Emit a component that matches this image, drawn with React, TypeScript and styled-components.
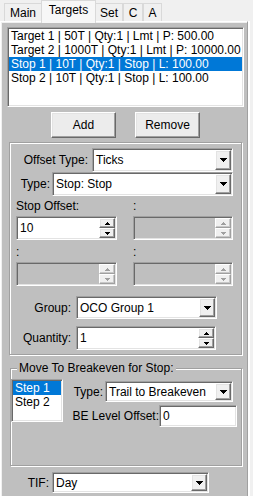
import React from 'react';
import styled, { createGlobalStyle, css } from 'styled-components';

const GlobalStyle = createGlobalStyle`
  html, body {
    margin: 0;
    padding: 0;
  }
  body {
    background: #f0f0f0;
    font-family: 'Liberation Sans', Arial, sans-serif;
    font-size: 12px;
    color: #000;
  }
`;

// 3d borders
const sunken = css`
  border: 1px solid;
  border-color: #a0a0a0 #fff #fff #a0a0a0;
  box-shadow: inset 1px 1px 0 #696969, inset -1px -1px 0 #e3e3e3;
`;
const raised = css`
  border: 1px solid;
  border-color: #fff #696969 #696969 #fff;
  box-shadow: inset -1px -1px 0 #a0a0a0, inset 1px 1px 0 #e3e3e3;
`;
const etched = css`
  border: 1px solid #a0a0a0;
  box-shadow: inset 1px 1px 0 #fff, 1px 1px 0 #fff;
`;

const targets = [
  'Target 1 | 50T | Qty:1 | Lmt | P: 500.00',
  'Target 2 | 1000T | Qty:1 | Lmt | P: 10000.00',
  'Stop 1 | 10T | Qty:1 | Stop | L: 100.00',
  'Stop 2 | 10T | Qty:1 | Stop | L: 100.00',
];

const tabs = [
  { name: 'Main', w: 38 },
  { name: 'Targets', w: 55 },
  { name: 'Set', w: 28 },
  { name: 'C', w: 20 },
  { name: 'A', w: 19 },
];

const DownArrow = ({ color = '#000' }: { color?: string }) => (
  <svg width='7' height='4' viewBox='0 0 7 4' shapeRendering='crispEdges'>
    <path d='M0 0h7v1h-1v1h-1v1h-1v1h-1v-1h-1v-1h-1v-1h-1z' fill={color} />
  </svg>
);

const SmallArrow = ({ up, color }: { up?: boolean; color: string }) => (
  <svg width='5' height='3' viewBox='0 0 5 3' shapeRendering='crispEdges'>
    {up ? (
      <path d='M2 0h1v1h1v1h1v1h-5v-1h1v-1h1z' fill={color} />
    ) : (
      <path d='M0 0h5v1h-1v1h-1v1h-1v-1h-1v-1h-1z' fill={color} />
    )}
  </svg>
);

const Combo = ({ w, h, value }: { w: number; h: number; value: string }) => (
  <ComboBox $w={w} $h={h}>
    <FieldText>{value}</FieldText>
    <DropButton>
      <DownArrow />
    </DropButton>
  </ComboBox>
);

const Spin = ({
  w,
  h,
  value,
  disabled,
}: {
  w: number;
  h: number;
  value?: string;
  disabled?: boolean;
}) => (
  <SpinBox $w={w} $h={h} $disabled={disabled}>
    <FieldText>{value}</FieldText>
    <SpinButtons>
      <SpinButton $disabled={disabled}>
        <SmallArrow up color={disabled ? '#a0a0a0' : '#000'} />
      </SpinButton>
      <SpinButton $disabled={disabled}>
        <SmallArrow color={disabled ? '#a0a0a0' : '#000'} />
      </SpinButton>
    </SpinButtons>
  </SpinBox>
);

const App = () => {
  return (
    <Window>
      <GlobalStyle />
      <TabStrip>
        {tabs.map((t) => (
          <Tab key={t.name} $w={t.w} $active={t.name === 'Targets'}>
            {t.name}
          </Tab>
        ))}
      </TabStrip>
      <TabFrame>
        <TabPage>
          <ListBox>
            {targets.map((t, i) => (
              <ListItem key={t} $selected={i === 2}>
                {t}
              </ListItem>
            ))}
          </ListBox>

          <ButtonRow>
            <Button>Add</Button>
            <Button>Remove</Button>
          </ButtonRow>

          <Panel>
            <FieldRow $mt={4}>
              <FieldLabel $w={81} $pr={4}>
                Offset Type:
              </FieldLabel>
              <Combo w={141} h={24} value='Ticks' />
            </FieldRow>
            <FieldRow $mt={0}>
              <FieldLabel $w={41} $pr={2}>
                Type:
              </FieldLabel>
              <Combo w={181} h={24} value='Stop: Stop' />
            </FieldRow>

            <OffsetGrid>
              <GridLabel>Stop Offset:</GridLabel>
              <GridLabel>:</GridLabel>
              <Spin w={101} h={24} value='10' />
              <Spin w={100} h={24} disabled />
              <GridLabel $mt={5}>:</GridLabel>
              <GridLabel $mt={5}>:</GridLabel>
              <Spin w={101} h={24} disabled />
              <Spin w={100} h={24} disabled />
            </OffsetGrid>

            <FieldRow $mt={10}>
              <FieldLabel $w={65} $pr={5}>
                Group:
              </FieldLabel>
              <Combo w={141} h={23} value='OCO Group 1' />
            </FieldRow>
            <FieldRow $mt={7}>
              <FieldLabel $w={65} $pr={5}>
                Quantity:
              </FieldLabel>
              <Spin w={140} h={24} value='1' />
            </FieldRow>
          </Panel>

          <GroupBox>
            <Legend>Move To Breakeven for Stop:</Legend>
            <BreakevenBody>
              <StepList>
                <ListItem $selected>Step 1</ListItem>
                <ListItem>Step 2</ListItem>
              </StepList>
              <BreakevenFields>
                <FieldRow $mt={0}>
                  <FieldLabel $w={33} $pr={2}>
                    Type:
                  </FieldLabel>
                  <Combo w={128} h={21} value='Trail to Breakeven' />
                </FieldRow>
                <FieldRow $mt={3}>
                  <FieldLabel $w={87} $pr={0}>
                    BE Level Offset:
                  </FieldLabel>
                  <TextBox $w={78} $h={22}>
                    <FieldText>0</FieldText>
                  </TextBox>
                </FieldRow>
              </BreakevenFields>
            </BreakevenBody>
          </GroupBox>

          <FieldRow $mt={6}>
            <FieldLabel $w={50} $pr={3}>
              TIF:
            </FieldLabel>
            <Combo w={157} h={21} value='Day' />
          </FieldRow>
        </TabPage>
      </TabFrame>
    </Window>
  );
};

export default App;

// styled
const Window = styled.div`
  width: 253px;
  height: 496px;
  display: flex;
  flex-direction: column;
  overflow: hidden;
`;

const TabStrip = styled.div`
  height: 21px;
  display: flex;
  align-items: flex-end;
  padding-left: 4px;
  position: relative;
  z-index: 1;
`;

const Tab = styled.div<{ $w: number; $active?: boolean }>`
  box-sizing: border-box;
  width: ${(p) => p.$w}px;
  height: ${(p) => (p.$active ? 23 : 18)}px;
  margin-bottom: ${(p) => (p.$active ? -2 : 0)}px;
  border: 1px solid #d9d9d9;
  border-bottom: none;
  margin-right: ${(p) => (p.$active ? -1 : 0)}px;
  margin-left: ${(p) => (p.$active ? -1 : 0)}px;
  background: ${(p) => (p.$active ? '#f7f7f7' : '#f0f0f0')};
  text-align: center;
  padding-top: 2px;
  line-height: 14px;
  white-space: nowrap;
`;

const TabFrame = styled.div`
  flex: 1;
  width: 248px;
  box-sizing: border-box;
  border-left: 1px solid #fff;
  border-top: 1px solid #fff;
  border-right: 1px solid #a0a0a0;
  padding: 1px 0 0 1px;
  background: #f0f0f0;
  box-shadow: 2px 0 0 #fff;
  display: flex;
`;

const TabPage = styled.div`
  flex: 1;
  background: #bfbfbf;
  display: flex;
  flex-direction: column;
  align-items: flex-start;
`;

const ListBox = styled.div`
  ${sunken};
  box-sizing: border-box;
  background: #fff;
  width: 237px;
  height: 80px;
  margin: 4px 0 0 5px;
  padding: 1px;
`;

const ListItem = styled.div<{ $selected?: boolean }>`
  height: 14px;
  line-height: 14px;
  padding-left: 2px;
  white-space: nowrap;
  overflow: hidden;
  background: ${(p) => (p.$selected ? '#0078d7' : 'transparent')};
  color: ${(p) => (p.$selected ? '#fff' : '#000')};
`;

const ButtonRow = styled.div`
  display: flex;
  gap: 19px;
  margin-top: 5px;
  padding-left: 49px;
`;

const Button = styled.button`
  ${raised};
  box-sizing: border-box;
  width: 65px;
  height: 26px;
  background: #ececec;
  font-family: inherit;
  font-size: 12px;
  color: #000;
  padding: 0;
  &:hover {
    cursor: pointer;
  }
`;

const Panel = styled.div`
  ${etched};
  box-sizing: border-box;
  width: 233px;
  height: 213px;
  margin: 4px 0 0 7px;
  padding: 1px;
  display: flex;
  flex-direction: column;
  align-items: flex-start;
`;

const FieldRow = styled.div<{ $mt: number }>`
  display: flex;
  align-items: center;
  margin-top: ${(p) => p.$mt}px;
`;

const FieldLabel = styled.div<{ $w: number; $pr: number }>`
  width: ${(p) => p.$w}px;
  padding-right: ${(p) => p.$pr}px;
  box-sizing: border-box;
  flex-shrink: 0;
  text-align: right;
  white-space: nowrap;
  line-height: 14px;
`;

const ComboBox = styled.div<{ $w: number; $h: number }>`
  ${sunken};
  box-sizing: border-box;
  width: ${(p) => p.$w}px;
  height: ${(p) => p.$h}px;
  padding: 1px;
  background: #fff;
  display: flex;
  align-items: stretch;
`;

const TextBox = styled(ComboBox)``;

const FieldText = styled.div`
  flex: 1;
  padding-left: 2px;
  display: flex;
  align-items: center;
  white-space: nowrap;
  overflow: hidden;
`;

const DropButton = styled.div`
  ${raised};
  box-sizing: border-box;
  width: 16px;
  background: #f0f0f0;
  display: flex;
  align-items: center;
  justify-content: center;
`;

const OffsetGrid = styled.div`
  display: grid;
  grid-template-columns: 101px 100px;
  column-gap: 16px;
  padding-left: 5px;
  margin-top: 3px;
  align-items: end;
`;

const GridLabel = styled.div<{ $mt?: number }>`
  line-height: 14px;
  margin-top: ${(p) => p.$mt ?? 0}px;
  margin-bottom: 3px;
`;

const SpinBox = styled.div<{ $w: number; $h: number; $disabled?: boolean }>`
  ${sunken};
  box-sizing: border-box;
  width: ${(p) => p.$w}px;
  height: ${(p) => p.$h}px;
  padding: 1px;
  background: ${(p) => (p.$disabled ? '#bfbfbf' : '#fff')};
  display: flex;
  align-items: stretch;
`;

const SpinButtons = styled.div`
  width: 16px;
  display: flex;
  flex-direction: column;
`;

const SpinButton = styled.div<{ $disabled?: boolean }>`
  ${raised};
  ${(p) =>
    p.$disabled &&
    css`
      border-color: #fff #a0a0a0 #a0a0a0 #fff;
      box-shadow: inset -1px -1px 0 #c8c8c8;
    `}
  box-sizing: border-box;
  flex: 1;
  background: #f0f0f0;
  display: flex;
  align-items: center;
  justify-content: center;
`;

const GroupBox = styled.fieldset`
  ${etched};
  box-sizing: border-box;
  width: 232px;
  height: 105px;
  margin: 6px 0 0 8px;
  padding: 4px 0 0 0;
  min-width: 0;
`;

const Legend = styled.legend`
  padding: 0 2px;
  margin-left: 6px;
  line-height: 14px;
  background: #bfbfbf;
`;

const BreakevenBody = styled.div`
  display: flex;
  align-items: flex-start;
`;

const StepList = styled.div`
  ${sunken};
  box-sizing: border-box;
  width: 52px;
  height: 43px;
  padding: 1px;
  background: #fff;
`;

const BreakevenFields = styled.div`
  display: flex;
  flex-direction: column;
  margin: 2px 0 0 9px;
`;
